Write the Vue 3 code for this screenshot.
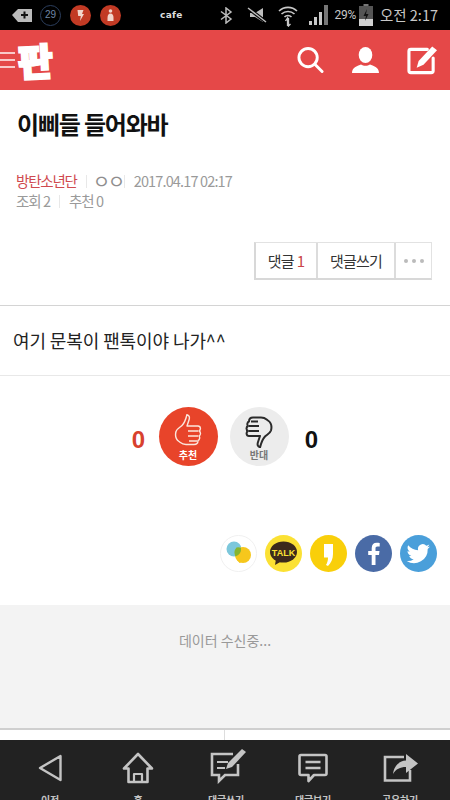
<script setup>
const navItems = [
  { label: '이전', key: 'back' },
  { label: '홈', key: 'home' },
  { label: '댓글쓰기', key: 'write' },
  { label: '댓글보기', key: 'view' },
  { label: '공유하기', key: 'share' }
]
</script>

<template>
  <div class="page">
    <div class="status">
      <div class="st-left">
        <svg class="st-plus" width="20" height="16" viewBox="0 0 20 16"><path d="M0 8 6 2h14v13H6z" fill="#bbb"/><path d="M12.500 4.500v7M9 8h7" stroke="#111" stroke-width="2"/></svg>
        <span class="st-count">29</span>
        <svg class="st-bolt" width="21" height="21" viewBox="0 0 21 21"><circle cx="10.500" cy="10.500" r="10.500" fill="#c23a24"/><path d="M7.500 5h6l-1.500 4h2l-4 7 .8-5H8.200z" fill="#f2d6cc"/></svg>
        <svg class="st-bolt" width="21" height="21" viewBox="0 0 21 21"><circle cx="10.500" cy="10.500" r="10.500" fill="#c23a24"/><circle cx="10.500" cy="6" r="1.800" fill="#f2d6cc"/><path d="M7.500 13a3 4.500 0 0 1 6 0v3h-6z" fill="#f2d6cc"/></svg>
        <span class="st-cafe">cafe</span>
      </div>
      <div class="st-right">
        <svg width="13" height="17" viewBox="0 0 13 17" fill="none" stroke="#bdbdbd" stroke-width="1.500"><path d="M1 4.500 11 12l-5 4V1l5 4-10 7.500"/></svg>
        <svg class="st-mute" width="20" height="16" viewBox="0 0 20 16"><path d="M3 6h5l8-5v14l-8-5H3z" fill="#bdbdbd"/><path d="M1 1 19 15" stroke="#000" stroke-width="3.500"/><path d="M1 1 19 15" stroke="#bdbdbd" stroke-width="1.500"/></svg>
        <svg class="st-wifi" width="20" height="23" viewBox="0 0 20 23" fill="none" stroke="#c8c8c8" stroke-width="1.600"><path d="M1 7a13 13 0 0 1 18 0M3.500 10a9.500 9.500 0 0 1 13 0M6.500 13a5 5 0 0 1 7 0"/><path d="M7.500 17l2-3v8M12.500 20l-2 2v-8" stroke-width="1.300"/></svg>
        <svg class="st-signal" width="19" height="20" viewBox="0 0 19 20"><path d="M0 20h3v-4H0zM5 20h3v-8H5zM10 20h3v-13h-3z" fill="#c8c8c8"/><path d="M15 20h4V0h-4z" fill="#777"/></svg>
        <span class="st-pct">29%</span>
        <svg class="st-batt" width="14" height="22" viewBox="0 0 14 22"><path d="M4.500 0h5v2h-5z" fill="#777"/><path d="M0 2h14v20H0z" fill="#555"/><path d="M0 15h14v7H0z" fill="#d0d0d0"/><path d="M8 5 4.500 12h2.500l-1 5 3.500-7H7z" fill="#111"/></svg>
        <span class="st-time">오전 2:17</span>
      </div>
    </div>

    <header class="top">
      <div class="brand">
        <div class="burger"><i></i><i></i><i></i></div>
        <span class="logo">판</span>
      </div>
      <div class="top-icons">
        <svg width="27" height="28" viewBox="0 0 28 28" fill="none" stroke="#fff" stroke-width="3" stroke-linecap="round"><circle cx="11.500" cy="11.500" r="9.500"/><path d="M18.500 18.500 26 26"/></svg>
        <svg width="27" height="26" viewBox="0 0 27 26" fill="#fff"><ellipse cx="13.500" cy="8" rx="6.800" ry="8"/><path d="M0 26c0-6 6-7 9-8.500 2.500 1.800 6.500 1.800 9 0 3 1.500 9 2.500 9 8.500z"/></svg>
        <svg width="31" height="29" viewBox="0 0 32 29" fill="none"><path d="M21 3H4a2 2 0 0 0-2 2v20a2 2 0 0 0 2 2h21a2 2 0 0 0 2-2V12" stroke="#fff" stroke-width="3.200" stroke-linecap="round"/><path d="M26 0l5 4-14 15-7 3 2-7z" fill="#fff"/></svg>
      </div>
    </header>

    <main class="main">
      <h1 class="title">이삐들 들어와바</h1>
      <div class="meta">
        <div class="meta-row"><span class="author">방탄소년단</span><i class="sep"></i><span class="oo">ㅇㅇ</span><i class="sep"></i><span class="date">2017.04.17 02:17</span></div>
        <div class="meta-row"><span>조회 2</span><i class="sep"></i><span>추천 0</span></div>
      </div>
      <div class="actions">
        <div class="btn-group">
          <span class="btn b1">댓글 <em>1</em></span>
          <span class="btn b2">댓글쓰기</span>
          <span class="btn b3"><i></i><i></i><i></i></span>
        </div>
      </div>
      <p class="body-text">여기 문복이 팬톡이야 나가^^</p>
      <div class="votes">
        <span class="num red">0</span>
        <div class="circle up">
          <svg width="30" height="34" viewBox="0 0 30 34" fill="none" stroke="#fbe6dd" stroke-width="1.400" stroke-linejoin="round"><path d="M14 1c2 0 3 2 2 5l-2 6h11c3 0 3 4 1 5 2 1 2 4 0 5 1 1 1 4-1 4.500 0 3-1 4-4 4H13c-4 0-5-1.500-7-3-3-2-4-6-3-10 1-3 4-4 6-6 3-3 4-7 5-11z"/><path d="M15 17h10M15 22h10M16 27h8"/></svg>
          <span>추천</span>
        </div>
        <div class="circle down">
          <svg width="30" height="34" viewBox="0 0 30 34" fill="none" stroke="#2a2a2a" stroke-width="2" stroke-linejoin="round"><path d="M16 33c-2 0-3-2-2-5l2-6H5C2 22 2 18 4 17c-2-1-2-4 0-5-1-1-1-4 1-4.500 0-3 1-4 4-4h8c4 0 5 1.500 7 3 3 2 4 6 3 10-1 3-4 4-6 6-3 3-4 7-5 11z"/><path d="M15 17H5M15 12H5M14 7.500H7"/></svg>
          <span>반대</span>
        </div>
        <span class="num dark">0</span>
      </div>
      <div class="share">
        <svg class="sh" width="37" height="37" viewBox="0 0 37 37"><circle cx="18.500" cy="18.500" r="18" fill="#fff" stroke="#f0f0f0"/><circle cx="14" cy="14" r="7.500" fill="#7cc7db"/><circle cx="23" cy="20" r="8" fill="#f6c71c"/><path d="M16.500 24l3 4 2-1z" fill="#f6c71c"/><path d="M16.500 12.500a8 8 0 0 0-1 8.900 7.500 7.500 0 0 0 5.500-8.500 8 8 0 0 0-4.500-.4z" fill="#86b52e"/></svg>
        <svg class="sh" width="37" height="37" viewBox="0 0 37 37"><circle cx="18.500" cy="18.500" r="18.500" fill="#fbe134"/><ellipse cx="18.500" cy="17" rx="13.500" ry="10.500" fill="#3c2a1c"/><path d="M11 24l-1 6 7-4z" fill="#3c2a1c"/><text x="18.500" y="20.500" text-anchor="middle" class="talk">TALK</text></svg>
        <svg class="sh" width="37" height="37" viewBox="0 0 37 37"><circle cx="18.500" cy="18.500" r="18.500" fill="#f9cf0a"/><path d="M14 9h9v10c0 5-2 9-5 12l-2-1c1.500-2.500 2-5 2-7.500h-4z" fill="#fff"/></svg>
        <svg class="sh" width="37" height="37" viewBox="0 0 37 37"><circle cx="18.500" cy="18.500" r="18.500" fill="#4a6ba6"/><path d="M20.500 30V20h3.500l.5-4h-4v-2.500c0-1.200.4-2 2-2h2.200V8c-.5 0-1.700-.2-3-.2-3 0-5 1.800-5 5.200v3h-3.500v4h3.500v10z" fill="#fff"/></svg>
        <svg class="sh" width="37" height="37" viewBox="0 0 37 37"><circle cx="18.500" cy="18.500" r="18.500" fill="#4a9fda"/><path d="M30 11.500c-.9.400-1.800.7-2.800.8 1-.6 1.800-1.500 2.100-2.700-.9.600-2 1-3 1.200a4.800 4.800 0 0 0-8.200 4.400c-4-.2-7.500-2.100-9.900-5-1.300 2.200-.6 5 1.500 6.400-.8 0-1.500-.2-2.200-.6 0 2.300 1.600 4.300 3.800 4.800-.7.200-1.400.2-2.100.1.600 1.900 2.400 3.300 4.500 3.300A9.700 9.700 0 0 1 6.700 26a13.700 13.700 0 0 0 21-12.100c1-.7 1.700-1.500 2.300-2.400z" fill="#fff"/></svg>
      </div>
      <div class="loading">데이터 수신중...</div>
      <div class="tabs"><div></div><div></div></div>
    </main>

    <nav class="nav">
      <div v-for="item in navItems" :key="item.key" class="nav-item">
        <div class="nav-icon">
          <svg v-if="item.key === 'back'" width="24" height="28" viewBox="0 0 24 28" fill="none" stroke="#c4c4c4" stroke-width="2.400" stroke-linejoin="round"><path d="M22.500 2v24L2 14z"/></svg>
          <svg v-else-if="item.key === 'home'" width="32" height="32" viewBox="0 0 32 32" fill="none" stroke="#c4c4c4" stroke-width="2.600" stroke-linejoin="round"><path d="M16 2 2 16.500h4.500V30h19V16.500H30z"/><path d="M12 30v-8h8v8" stroke-width="2.200"/></svg>
          <svg v-else-if="item.key === 'write'" class="write-ic" width="38" height="36" viewBox="0 0 38 34" fill="none" stroke="#c4c4c4" stroke-width="2.600"><path d="M24 5H3v21h7v6l6-6h13V15"/><path d="M8 13h11M8 19h8" stroke-width="2.200"/><path d="M33 0l4 3-14 15-6 2 2-6z" fill="#c4c4c4" stroke="none"/></svg>
          <svg v-else-if="item.key === 'view'" width="30" height="30" viewBox="0 0 30 30" fill="none" stroke="#c4c4c4" stroke-width="2.600" stroke-linejoin="round"><path d="M3 2h24a1.500 1.500 0 0 1 1.500 1.500v17A1.500 1.500 0 0 1 27 22H16l-5.500 6V22H3a1.500 1.500 0 0 1-1.500-1.500v-17A1.500 1.500 0 0 1 3 2z"/><path d="M7.500 9h15M7.500 15h15"/></svg>
          <svg v-else width="35" height="28" viewBox="0 0 35 28" fill="none"><path d="M21 3H2v23.500h25V16" stroke="#c4c4c4" stroke-width="2.600"/><path d="M23 0l12 9.500L23 19v-6c-6 0-10 2-13 7 1-8 6-13 13-13.500z" fill="#c4c4c4"/></svg>
        </div>
        <span class="nav-label">{{ item.label }}</span>
      </div>
    </nav>
  </div>
</template>

<style scoped>
.page {
  width: 450px;
  height: 800px;
  overflow: hidden;
  display: flex;
  flex-direction: column;
  background: #fff;
  font-family: "Noto Sans CJK KR", "Noto Sans", sans-serif;
}
.status {
  height: 30px;
  flex: none;
  background: #000;
  display: flex;
  align-items: center;
  justify-content: space-between;
  padding: 0 12px;
  color: #c8c8c8;
}
.st-left, .st-right { display: flex; align-items: center; }
.st-count {
  width: 21px;
  height: 21px;
  box-sizing: border-box;
  margin-left: 8px;
  border: 1.500px solid #2c3f5e;
  border-radius: 50%;
  font: 10px/18px "Liberation Sans", sans-serif;
  text-align: center;
  color: #6f86a8;
}
.st-bolt { margin-left: 9px; }
.st-cafe { margin-left: 39px; font: bold 9px "DejaVu Sans", sans-serif; color: #ddd; letter-spacing: .3px; }
.st-mute { margin-left: 14px; }
.st-wifi { margin-left: 11px; }
.st-signal { margin-left: 11px; }
.st-pct { margin-left: 7px; font: 12px "Roboto", sans-serif; letter-spacing: -.3px; }
.st-batt { margin-left: 3px; }
.st-time { margin-left: 7px; font-size: 14.500px; line-height: 20px; }
.top {
  height: 60px;
  flex: none;
  background: #e54848;
  display: flex;
  align-items: center;
  justify-content: space-between;
  padding-right: 12px;
}
.brand { display: flex; align-items: center; }
.burger { width: 15px; display: flex; flex-direction: column; gap: 5px; }
.burger i { display: block; height: 2px; background: #f9c9c9; }
.logo {
  margin-left: 3px;
  font-size: 38px;
  font-weight: 900;
  line-height: 48px;
  color: #fff;
  -webkit-text-stroke: 2px #fff;
  transform: rotate(-3deg);
}
.top-icons { display: flex; align-items: center; gap: 28px; }
.main { flex: 1; min-height: 0; display: flex; flex-direction: column; }
.title {
  margin: 15px 0 0 17px;
  font-size: 24px;
  font-weight: 700;
  line-height: 38px;
  letter-spacing: -1.200px;
  color: #111;
}
.meta { margin: 28px 0 0 16px; font-size: 14.500px; line-height: 20px; letter-spacing: -1px; color: #9a9a9a; }
.meta-row { display: flex; align-items: center; }
.author { color: #cf4a4f; letter-spacing: -1.200px; }
.oo { flex: none; width: 22px; margin-left: -3px; white-space: nowrap; font-size: 19px; letter-spacing: -2.500px; color: #8e8e8e; }
.date { letter-spacing: -.85px; }
.sep { width: 1px; height: 13px; margin: 0 9px; background: #e8e8e8; }
.actions { display: flex; justify-content: flex-end; margin: 31px 18px 0 0; }
.btn-group {
  display: flex;
  height: 38px;
  box-sizing: border-box;
  border: 1px solid #e2e2e2;
  border-bottom: 2px solid #d8d8d8;
  border-left: 2px solid #d8d8d8;
}
.btn {
  display: flex;
  align-items: center;
  justify-content: center;
  gap: 3px;
  font-size: 15px;
  letter-spacing: -.8px;
  color: #333;
  border-right: 2px solid #dcdcdc;
}
.btn em { font-style: normal; color: #c9444a; }
.b1 { width: 60px; }
.b2 { width: 76px; }
.b3 { width: 35px; gap: 4px; border-right: 0; }
.b3 i { width: 4px; height: 4px; border-radius: 50%; background: #bbb; }
.body-text {
  margin: 25px 0 0;
  padding: 16px 13px 17px;
  border-top: 1px solid #d4d4d4;
  border-bottom: 1px solid #e8e8e8;
  font-size: 18px;
  line-height: 36px;
  height: 36px;
  letter-spacing: -.1px;
  color: #222;
}
.votes { display: flex; align-items: center; justify-content: center; gap: 12px; margin-top: 31px; }
.num { width: 16px; padding-top: 6px; font: bold 24px "Liberation Sans", sans-serif; text-align: center; }
.red { color: #d8412d; }
.dark { color: #111; margin-left: 3px; }
.circle {
  width: 59px;
  height: 59px;
  border-radius: 50%;
  display: flex;
  flex-direction: column;
  align-items: center;
  padding-top: 7px;
  box-sizing: border-box;
  font-size: 10px;
  font-weight: 700;
  line-height: 14px;
}
.up { background: #e8442a; color: #fff; }
.down { background: #ececec; color: #777; }
.share { display: flex; justify-content: flex-end; gap: 8px; margin-top: 69px; padding-right: 13px; }
.sh { flex: none; display: block; }
.talk { font: bold 9px "Liberation Sans", sans-serif; fill: #fbe134; }
.loading {
  margin-top: 33px;
  height: 125px;
  padding-top: 25px;
  box-sizing: border-box;
  background: #f3f3f3;
  border-bottom: 2px solid #cfcfcf;
  font-size: 14px;
  line-height: 20px;
  text-align: center;
  color: #999;
}
.tabs { flex: 1; display: grid; grid-template-columns: 1fr 1fr; }
.tabs div:first-child { border-right: 1px solid #ddd; }
.nav {
  height: 60px;
  flex: none;
  background: #222;
  display: grid;
  grid-template-columns: 88px 88px 88px 86px 88px;
  padding-left: 6px;
  overflow: hidden;
}
.nav-item { display: flex; flex-direction: column; align-items: center; }
.nav-icon { height: 50px; padding-top: 3px; display: flex; align-items: center; justify-content: center; }
.write-ic { margin-left: 4px; margin-top: -4px; }
.nav-label { font-size: 10px; font-weight: 700; line-height: 14px; color: #c4c4c4; letter-spacing: -.2px; }
</style>

<style>
body { background: #fff; }
</style>
